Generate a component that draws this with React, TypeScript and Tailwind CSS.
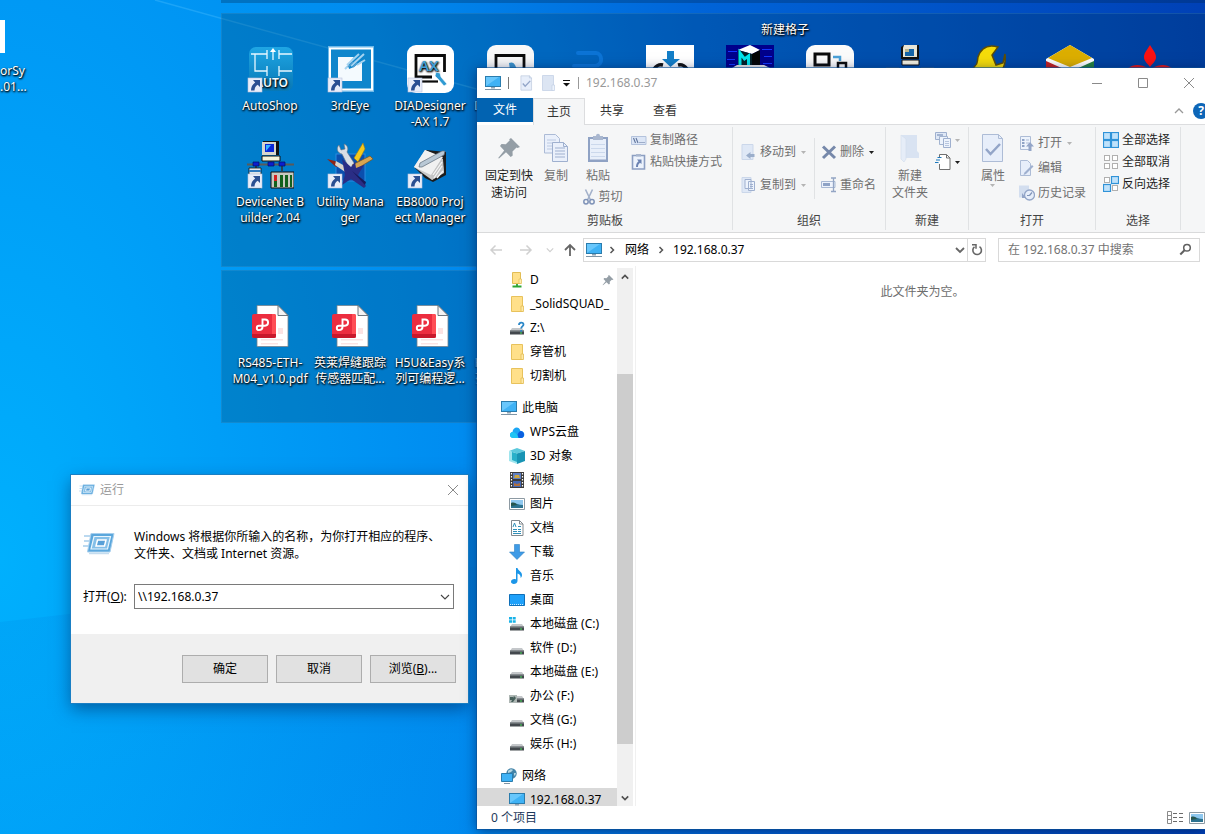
import React, { useState } from 'react';

type IconProps = { className?: string };

/* ---------- Desktop icons (48 x 48) ---------- */

const ShortcutArrow: React.FC = () => (
  <g>
    <rect x="2" y="33" width="14" height="14" fill="#e9edf9" stroke="#b9c3dc" strokeWidth="0.6" />
    <path d="M7 35h7v7l-2.3-2.2c-2 1.4-3 3-3.2 5.700H5c0-3.500 1.200-6 4.200-8.100z" fill="#2b4f92" />
  </g>
);

const DesktopSvg: React.FC<{ children: React.ReactNode; shortcut?: boolean }> = ({ children, shortcut }) => (
  <svg viewBox="0 0 48 48" className="h-12 w-12 shrink-0" aria-hidden="true">
    {children}
    {shortcut && <ShortcutArrow />}
  </svg>
);

const AutoShopIcon = () => (
  <DesktopSvg shortcut>
    <defs>
      <linearGradient id="autoshop" x1="0" y1="0" x2="0" y2="1">
        <stop offset="0" stopColor="#1fa6e4" />
        <stop offset="1" stopColor="#0878b5" />
      </linearGradient>
    </defs>
    <rect x="3" y="2" width="44" height="44" rx="7" fill="url(#autoshop)" />
    <path d="M5 9h16M21 5v9M33 5v9M33 9h13M9 9v17h12M21 21v10M33 21v10M33 26h13M27 6v9" stroke="#e8f8ff" strokeWidth="1.300" fill="none" />
    <path d="M24 7l3-4 3 4z" fill="#fff" />
    <text x="9" y="42" fontFamily="Noto Sans, sans-serif" fontWeight="600" fontSize="12" fill="#f2fbff">AUTO</text>
  </DesktopSvg>
);

const ThirdEyeIcon = () => (
  <DesktopSvg shortcut>
    <rect x="2" y="1" width="46" height="46" fill="#6fb9e8" />
    <rect x="4" y="3.500" width="42" height="41" fill="#0f86cc" stroke="#fff" strokeWidth="2" />
    <path d="M12 12h16l-6 7 1 5 5-2 5-4 3-2v20H15l-3-3z" fill="#f4fafe" />
    <path d="M21 20l12-11M25 21l13-12M31 20l8-5M19 24l4-4" stroke="#a5d3f0" strokeWidth="2" />
    <path d="M22 22l5-5M27 22l4-4" stroke="#4d9ed2" strokeWidth="1.500" />
  </DesktopSvg>
);

const DiaDesignerIcon = () => (
  <DesktopSvg shortcut>
    <rect x="1" y="0" width="47" height="48" rx="9" fill="#fff" />
    <path d="M26 32H10V10.500h28.500V27" stroke="#0b0b0b" strokeWidth="2.800" fill="none" />
    <path d="M16 36.500h16" stroke="#0b0b0b" strokeWidth="2.200" />
    <text x="13" y="26" fontFamily="Noto Sans, sans-serif" fontWeight="600" fontSize="15" fill="#429fd6">AX</text>
    <path d="M30 27l4 1 1 4 6 7-3 2-6-7-3-3z" fill="#2f9ad2" stroke="#fff" strokeWidth="0.600" />
  </DesktopSvg>
);

const DeviceNetIcon = () => (
  <DesktopSvg shortcut>
    <path d="M17 0h16v14H17z" fill="#111" />
    <path d="M16 1h14v13H16z" fill="#d6d6ce" />
    <path d="M19 3h9v8h-9z" fill="#0a28d8" />
    <path d="M20 4h5l-5 6z" fill="#36b4ff" />
    <path d="M16 15h18v5H16z" fill="#f3f3da" stroke="#111" />
    <path d="M1 23.500h48" stroke="#5a5a5a" strokeWidth="2" />
    <path d="M25 20v3M10 25v4M36 25v5" stroke="#333" strokeWidth="1.500" />
    <path d="M7 21h6v4H7zM22 21h6v4h-6zM33 21h6v4h-6z" fill="#0a1ed0" stroke="#05105e" strokeWidth="0.700" />
    <path d="M3 27h12v20H3z" fill="#e0e4e8" stroke="#111" strokeWidth="0.800" />
    <path d="M3 30h12" stroke="#2f7ac0" strokeWidth="2" />
    <path d="M25 31h23v16H25z" fill="#c9c9c0" stroke="#111" />
    <path d="M28 34h3v12h-3zM34 34h3v12h-3zM39 34h3v12h-3zM44 34h2v12h-2z" fill="#12601c" />
    <path d="M28 34h3v6h-3z" fill="#d42020" />
  </DesktopSvg>
);

const UtilityIcon = () => (
  <DesktopSvg shortcut>
    <rect x="10" y="13" width="29" height="27" fill="#0b4fae" stroke="#2a8ae0" />
    <path d="M13 4c-3 3-2 8 3 9l8 16 6-4-9-14c2-4 0-7-3-8l1 5-4 1z" fill="#d9dee6" stroke="#68737f" strokeWidth="0.600" />
    <path d="M37 2l-9 15 4 4 7-13z" fill="#f4c91e" stroke="#a67b10" strokeWidth="0.600" />
    <path d="M47 18l-3-3-18 9 3 5z" fill="#d7a552" stroke="#7a531a" strokeWidth="0.700" />
    <path d="M1 18l8 2 5 4-4 2z" fill="#8f2517" />
    <path d="M10 20l16 9-4 4-13-9z" fill="#d9d4cc" />
    <path d="M16 18l9 8 4-5 1 6 8-3-6 10 8 11-2 2-13-9-9 6 3-10z" fill="#2a2d85" />
    <path d="M26 30l14 11-1 3z" fill="#171a5c" />
  </DesktopSvg>
);

const Eb8000Icon = () => (
  <DesktopSvg shortcut>
    <path d="M9 27L20 9l20 2v23L27 41l-8-4z" fill="#1c1c1c" />
    <path d="M8 26L19 9l18 9 1 14-12 7-7-5z" fill="#c9c9c9" />
    <path d="M8 26L19 9l18 7-12 18z" fill="#f1f1f1" />
    <path d="M25 35l11-18 2 14-12 8z" fill="#c4c4c4" />
    <path d="M28 37l8-12M27 34l9-13M31 37l6-7" stroke="#f6f6f6" strokeWidth="1.300" />
    <path d="M14 22l22-12h3l-1 4-22 12-3 0z" fill="#b9c8d5" stroke="#5b6a78" strokeWidth="0.700" />
  </DesktopSvg>
);

const ScreenAppIcon = () => (
  <DesktopSvg>
    <rect x="1" y="0" width="47" height="48" rx="9" fill="#f8f8f8" />
    <path d="M10 36V10.500h28V36z" stroke="#0b0b0b" strokeWidth="2.800" fill="none" />
    <path d="M23 18c5-2 6 2 8 6l-7 1z" fill="#3b93cb" />
  </DesktopSvg>
);

const SwirlIcon = () => (
  <DesktopSvg>
    <path d="M12 8h18c6 0 8 12-1 13H8" stroke="#0c74d6" strokeWidth="4" fill="none" strokeLinecap="round" />
  </DesktopSvg>
);

const DownloadAppIcon = () => (
  <DesktopSvg>
    <rect width="48" height="48" fill="#fff" />
    <path d="M21 6h7v8h6l-9.500 8L16 14h5z" fill="#147fc8" />
    <path d="M8 24c3-4 5-5 9-4M41 24c-3-4-5-5-9-4" stroke="#111" strokeWidth="3.500" fill="none" />
  </DesktopSvg>
);

const CubeIcon = () => (
  <DesktopSvg>
    <rect width="48" height="48" fill="#00008b" />
    <path d="M2 6h9v1H2zM36 4h10v1H36zM1 14h8v1H1zM38 11h8v1h-8zM3 19h6v1H3zM37 18h9v1h-9z" fill="#1236ff" />
    <path d="M12 5l12-5 10 5-8 4z" fill="#fff" />
    <path d="M26 9l8-4v17h-8z" fill="#050505" />
    <path d="M12 5l14 4v14H12z" fill="#032128" />
    <path d="M14 20V8l4.500 6 4-3v11" stroke="#00e4ec" strokeWidth="3" fill="none" />
    <path d="M6 23l5-3h27l6 3v2H6z" fill="#e9e9e9" />
  </DesktopSvg>
);

const LinkAppIcon = () => (
  <DesktopSvg>
    <rect width="48" height="48" rx="9" fill="#fbfbfb" />
    <path d="M9 9h14v11H9z" stroke="#0b0b0b" strokeWidth="3" fill="none" />
    <path d="M27 12h7v4" stroke="#4aa1d8" strokeWidth="2.500" fill="none" />
    <path d="M32 24v-6h8v6" stroke="#0b0b0b" strokeWidth="2.500" fill="none" />
  </DesktopSvg>
);

const OldPcIcon = () => (
  <DesktopSvg>
    <path d="M15 2l3-2h15v14H15z" fill="#111" />
    <path d="M18 0h13v12H17V3z" fill="#e8e5d6" />
    <path d="M19 4h9v7h-9z" fill="#1464a8" />
    <path d="M19 4h4v3h-4z" fill="#b9b58f" />
    <path d="M16 15h17v5H16z" fill="#f4f2e2" stroke="#111" />
    <path d="M0 23h13M35 23h13" stroke="#5f656b" strokeWidth="1.500" />
  </DesktopSvg>
);

const YellowWrenchIcon = () => (
  <DesktopSvg>
    <path d="M0 32l9-11c3-2 2-4 3-9C15 3 22-1 32 2l-6 8 4 10 7-2 2-9c1 8-1 13-3 16L8 40z" fill="#f5dc0a" stroke="#5b4d08" strokeWidth="1.500" />
  </DesktopSvg>
);

const GoldBoxIcon = () => (
  <DesktopSvg>
    <path d="M0 14L24 0l24 14v26H0z" fill="#fff" />
    <path d="M2 13L24 0l22 13-22 9z" fill="#dcae00" />
    <path d="M0 16l20 9v20L0 34z" fill="#c42121" />
    <path d="M48 16l-20 9v20l20-11z" fill="#26823f" />
  </DesktopSvg>
);

const RedDiamondIcon = () => (
  <DesktopSvg>
    <path d="M24 0c3 5 6 8 6 12s-3 6-6 10c-3-4-6-6-6-10s3-7 6-12z" fill="#fb1212" />
    <path d="M2 23c6-4 12-4 20 0l2 6H8zM46 23c-6-4-12-4-20 0l-2 6h16z" fill="#e01818" />
  </DesktopSvg>
);

const PdfIcon = () => (
  <DesktopSvg>
    <path d="M11 3.500h21l10 10v31H11z" fill="#fff" stroke="#77838d" strokeWidth="0.800" />
    <path d="M32 3.500l10 10H32z" fill="#f3f3f3" stroke="#5e6870" strokeWidth="0.900" />
    <path d="M32 26h5v6h-5zM15 37h22v1.500H15zM15 41h17v1.500H15z" fill="#fbe3e3" />
    <rect x="6" y="12" width="24" height="24" rx="2" fill="#ec2d3f" />
    <path d="M26 12h2a2 2 0 012 2v20a2 2 0 01-2 2h-2z" fill="#ff4d55" />
    <path d="M6 32h24v2a2 2 0 01-2 2H8a2 2 0 01-2-2z" fill="#c8182b" />
    <path d="M16.500 20V17.500h2.500a3.100 3.100 0 010 6.200h-6a2.200 2.200 0 100 4.400c2.300 0 3.500-1 3.500-3V20" stroke="#fff" strokeWidth="1.900" fill="none" />
  </DesktopSvg>
);

/* ---------- Small icons ---------- */

const MonitorIcon: React.FC<IconProps> = ({ className = 'h-4 w-4' }) => (
  <svg viewBox="0 0 16 16" className={className} aria-hidden="true">
    <rect x="0.500" y="1.500" width="15" height="10" fill="#3fb2f5" stroke="#2a7cad" />
    <path d="M1 2h13L1 11z" fill="#7bd0ff" opacity="0.700" />
    <path d="M6 12h4v1.500H6z" fill="#8fa3b3" />
    <path d="M0 14.500h16" stroke="#7f95a6" />
  </svg>
);

const FolderIcon: React.FC<{ shared?: boolean }> = ({ shared }) => (
  <svg viewBox="0 0 16 16" className="h-4 w-4" aria-hidden="true">
    {shared ? (
      <>
        <path d="M3.500.5h8v11h-8z" fill="#ffe08a" stroke="#e2bd55" />
        <path d="M10 7h2.500v4.500H10z" fill="#ffedb0" stroke="#e2bd55" strokeWidth="0.700" />
        <path d="M8 12v2.500M3.500 14.500h9" stroke="#2ca534" strokeWidth="1.800" />
      </>
    ) : (
      <>
        <path d="M2.500.5h11v15h-11z" fill="#ffe08a" stroke="#e8c25c" />
        <path d="M12 10h2.500v5.500H12z" fill="#ffe9a6" stroke="#e2bd55" strokeWidth="0.800" />
      </>
    )}
  </svg>
);

const DriveIcon: React.FC<{ variant?: 'system' | 'office' | 'unknown' }> = ({ variant }) => (
  <svg viewBox="0 0 16 16" className="h-4 w-4" aria-hidden="true">
    <path d="M3 8h10l2 3H1z" fill="#c4c7ca" />
    <path d="M1 10.500h14v4H1z" fill="#43484d" />
    <path d="M1 10.500h14v1H1z" fill="#8d9296" />
    <rect x="11" y="12.500" width="2" height="1" fill="#46e05a" />
    {variant === 'system' && <path d="M0 1h3v2.500H0zM3.700 1h3v2.500h-3zM0 4.200h3v2.500H0zM3.700 4.200h3v2.500h-3z" fill="#18b2e8" />}
    {variant === 'office' && (
      <>
        <path d="M0 7h8v8H0z" fill="#aeb7b4" />
        <path d="M1 9h3v3H1zM5 8l2 2-3 4H2z" fill="#47605c" />
      </>
    )}
    {variant === 'unknown' && (
      <path d="M10 5c0-3 4.500-3 4.500-.5 0 2-2.300 1.800-2.300 4M12.200 10v1.800" stroke="#2b87c8" strokeWidth="1.800" fill="none" />
    )}
  </svg>
);

const CloudIcon = () => (
  <svg viewBox="0 0 16 16" className="h-4 w-4" aria-hidden="true">
    <path d="M4.500 14C0 14 0 8.500 3.500 8 4 3 10 1.500 11.500 7 16.500 7 16.500 14 12 14z" fill="#1ba6f5" />
    <path d="M8 14c0-3 1.500-7 4-7 4 .5 4 7 0 7z" fill="#0b5fe0" />
    <path d="M4.500 14C0 14 0 8.500 3.500 8c3 0 5.500 3 6 6z" fill="#20c4f4" />
  </svg>
);

const Cube3dIcon = () => (
  <svg viewBox="0 0 16 16" className="h-4 w-4" aria-hidden="true">
    <path d="M0 3l8-3 8 3-8 2.500z" fill="#5cc9dd" />
    <path d="M0 3l8 2.500V16l-8-3z" fill="#9fe5ee" />
    <path d="M16 3L8 5.500V16l8-3z" fill="#1894b4" />
    <path d="M3 4l5 1.500V14l-5-2z" fill="#29b0c9" />
  </svg>
);

const VideoIcon = () => (
  <svg viewBox="0 0 16 16" className="h-4 w-4" aria-hidden="true">
    <path d="M1 0h14v16H1z" fill="#3b3b3b" />
    <path d="M4 1h8v6H4z" fill="#5e7fc4" />
    <path d="M4 9h8v6H4z" fill="#4468b5" />
    <path d="M6 3h4l1 3H5z" fill="#cda540" />
    <path d="M5 11l3 1 3-1v3H5z" fill="#b0703f" />
    <path d="M2.500 1v15M13.500 1v15" stroke="#fff" strokeWidth="1.200" strokeDasharray="1.500 1.500" />
  </svg>
);

const PictureIcon: React.FC<IconProps> = ({ className = 'h-4 w-4' }) => (
  <svg viewBox="0 0 16 16" className={className} aria-hidden="true">
    <path d="M.5 2.500h15v11H.5z" fill="#fff" stroke="#8d9aa3" />
    <path d="M2 4h12v8H2z" fill="#8fc8ef" />
    <path d="M2 8c4-2 6 1 12 1v3H2z" fill="#2d7390" />
    <path d="M2 7c3-1 5 0 6 2l-6 1z" fill="#27564e" />
  </svg>
);

const DocumentIcon = () => (
  <svg viewBox="0 0 16 16" className="h-4 w-4" aria-hidden="true">
    <path d="M2.500.5h8l3.500 3.500v11.500H2.500z" fill="#fff" stroke="#82898e" />
    <path d="M10.500.5V4H14" fill="none" stroke="#82898e" />
    <path d="M4 7l1.500-4L7 7M4 9.500h4M4 11.500h4M4 13.500h8M9 6.500h3M9 9.500h3M9 11.500h3" stroke="#2f8fb8" fill="none" />
  </svg>
);

const DownloadIcon = () => (
  <svg viewBox="0 0 16 16" className="h-4 w-4" aria-hidden="true">
    <path d="M5.500.5h5V8h5L8 15.500.5 8h5z" fill="#3f9be6" stroke="#2b7fc4" strokeWidth="0.600" />
  </svg>
);

const MusicIcon = () => (
  <svg viewBox="0 0 16 16" className="h-4 w-4" aria-hidden="true">
    <path d="M7 0h1.500c.5 3 4.500 3.500 4.500 7 0 1.500-.7 2.500-1.500 3 .5-2.500-1-4-3-4.500V13c0 3.500-6.500 4-6.500.8C2 11.500 5 10.500 7 11.500z" fill="#1b96e8" />
  </svg>
);

const DesktopPlaceIcon = () => (
  <svg viewBox="0 0 16 16" className="h-4 w-4" aria-hidden="true">
    <path d="M.5 2.500h15v11H.5z" fill="#1fa1fa" stroke="#0f6fb8" />
    <path d="M1 12.500h14" stroke="#fff" strokeDasharray="1 1" opacity="0.800" />
  </svg>
);

const NetworkIcon = () => (
  <svg viewBox="0 0 16 16" className="h-4 w-4" aria-hidden="true">
    <circle cx="10.500" cy="5.500" r="5.200" fill="#4484a8" />
    <path d="M7 3c2-2 4-2 5-1l-2 2-3 1zM13 5h2l-1 3-1-1z" fill="#b5d6e2" />
    <path d="M.5 5.500h11v8H.5z" fill="#3fb2f5" stroke="#2a7cad" />
    <path d="M3 15.500h6" stroke="#7f95a6" />
  </svg>
);

const PinIcon: React.FC<IconProps> = ({ className = 'h-6 w-6' }) => (
  <svg viewBox="0 0 24 24" className={className} aria-hidden="true">
    <path d="M14 2l9 9-2.500 1-1-.5-4 4 .2 4-2 1.500-4.700-4.700L2 22.500 1.200 22l6-7.500L3 10l1.500-2 4.300.3 4-4-.6-1z" fill="#949ea6" />
  </svg>
);

const RunIcon: React.FC<IconProps> = ({ className }) => (
  <svg viewBox="0 0 32 24" className={className} aria-hidden="true">
    <path d="M8 1.500h23L27 20H4.500z" fill="#5ba7dc" stroke="#a7cfee" />
    <path d="M11 4.500h16.500L24.500 17H8z" fill="#84bfe8" stroke="#e8f5fd" strokeWidth="1.200" />
    <path d="M14.500 8h8.500l-1.500 6h-8.500z" fill="#58a0d8" stroke="#fff" strokeWidth="1.500" />
    <path d="M1 4h6M1 9h5M0 14h5" stroke="#a5cdec" strokeWidth="1.300" />
    <path d="M6 21.500h20" stroke="#c4dcef" strokeWidth="1.500" />
  </svg>
);

const CopyPagesIcon = () => (
  <svg viewBox="0 0 26 30" className="h-[30px] w-[26px]" aria-hidden="true">
    <path d="M1.500 1.500h11l4 4V20h-15z" fill="#eaf0fb" stroke="#acbbd6" />
    <path d="M4 7h9M4 10h9M4 13h9M4 16h9" stroke="#bccae2" />
    <path d="M9.500 9.500h11l4 4V28.500h-15z" fill="#eaf0fb" stroke="#9fb0cf" />
    <path d="M20.500 9.500v4h4M12 15h10M12 18h10M12 21h10M12 24h10" stroke="#9fb0cf" fill="none" />
  </svg>
);

const ClipboardIcon = () => (
  <svg viewBox="0 0 22 30" className="h-[30px] w-[22px]" aria-hidden="true">
    <path d="M1 4h20v25H1z" fill="#8fa2c4" />
    <path d="M3 6h16v20.500H3z" fill="#e8effa" />
    <path d="M4 11.500h14M4 15.500h14M4 19.500h14M4 23.500h14" stroke="#cbd8ec" />
    <path d="M6 3h3c0-3 4-3 4 0h3v4H6z" fill="#a9b7cf" />
  </svg>
);

const ScissorsIcon = () => (
  <svg viewBox="0 0 12 16" className="h-4 w-3" aria-hidden="true">
    <path d="M2.500.5L7.500 11M9.500.5L4.500 11" stroke="#a3b1ca" strokeWidth="1.600" />
    <circle cx="3" cy="12.800" r="2.200" fill="none" stroke="#7f93b8" strokeWidth="1.500" />
    <circle cx="9" cy="12.800" r="2.200" fill="none" stroke="#7f93b8" strokeWidth="1.500" />
  </svg>
);

const PathIcon = () => (
  <svg viewBox="0 0 16 16" className="h-4 w-4" aria-hidden="true">
    <path d="M.5 4.500h14.500v8H.5z" fill="#dce6f6" stroke="#b3c2dc" />
    <path d="M2.500 6l2 5M5 6l2 5M8.500 10.500h1M10.500 10.500h1M12.500 10.500h1" stroke="#60759c" strokeWidth="1.100" />
  </svg>
);

const PasteShortcutIcon = () => (
  <svg viewBox="0 0 16 16" className="h-4 w-4" aria-hidden="true">
    <path d="M1.500 1.500h12v13.500h-12z" fill="#edf3fc" stroke="#8c9fc2" strokeWidth="1.600" />
    <path d="M5 0h5v2.500H5z" fill="#a9b7cf" />
    <path d="M6 5.500h4.500V10L9 8.800C7.500 10 7 11 7 13H5c0-3 1-4.500 2.500-5.800z" fill="#6c83b2" />
  </svg>
);

const MoveToIcon = () => (
  <svg viewBox="0 0 16 16" className="h-4 w-4" aria-hidden="true">
    <path d="M1 .5h11v15H1z" fill="#dfe8f6" stroke="#cbd7ea" />
    <path d="M13.500 10v3h-4v2L5 11.500 9.500 8v2z" fill="#9baecb" />
  </svg>
);

const CopyToIcon = () => (
  <svg viewBox="0 0 16 16" className="h-4 w-4" aria-hidden="true">
    <path d="M1 .5h9v15H1z" fill="#dfe8f6" stroke="#cbd7ea" />
    <path d="M4 2.500h6v9H4zM7.500 4.500h6v9h-6z" fill="#edf3fc" stroke="#9fb0cf" />
    <path d="M9 7.500h3M9 9.500h3M9 11.500h3" stroke="#9fb0cf" />
  </svg>
);

const DeleteIcon = () => (
  <svg viewBox="0 0 16 16" className="h-4 w-4" aria-hidden="true">
    <path d="M2 2.500l12 11.500M14 2.500L2 14" stroke="#7688aa" strokeWidth="3" />
  </svg>
);

const RenameIcon = () => (
  <svg viewBox="0 0 16 16" className="h-4 w-4" aria-hidden="true">
    <path d="M.5 4.500h13.500v6H.5z" fill="#eef3fc" stroke="#a9b9d4" />
    <path d="M2 6h7v3H2z" fill="#8fa3c6" />
    <path d="M12.500 1v13M10 1h5M10 14.500h5" stroke="#93a5c4" strokeWidth="1.300" />
  </svg>
);

const NewFolderIcon = () => (
  <svg viewBox="0 0 22 30" className="h-[30px] w-[22px]" aria-hidden="true">
    <path d="M3 2h15v16l2 2v5H5z" fill="#d9e3f2" />
    <path d="M2 2l5 4v20l-2 3-3-3z" fill="#e6edf8" stroke="#d0dbeb" strokeWidth="0.600" />
  </svg>
);

const NewItemIcon = () => (
  <svg viewBox="0 0 17 16" className="h-4 w-[17px]" aria-hidden="true">
    <path d="M.5.5h11v7H.5z" fill="#dfe8f6" stroke="#9fb0cf" />
    <path d="M2 3h6" stroke="#8fa3c6" strokeWidth="1.500" />
    <path d="M4.500 4.500h8v8h-8z" fill="#edf3fc" stroke="#a3b4d0" />
    <path d="M8.500 6.500h7v9h-7z" fill="#edf3fc" stroke="#9fb0cf" />
    <path d="M10 9.500h4M10 11.500h4M10 13.500h4" stroke="#b7c5de" />
  </svg>
);

const EasyAccessIcon = () => (
  <svg viewBox="0 0 17 16" className="h-4 w-[17px]" aria-hidden="true">
    <path d="M4.500.5h7L15 4v11.500H4.500z" fill="#fff" />
    <path d="M4.500 3V.5h7L15 4v11.500H4.500V10M11.500.5V4H15" fill="none" stroke="#707070" />
    <path d="M2.500 3.500h4M1 6h4M0 8.500h3.500" stroke="#1b78bd" strokeWidth="1.200" />
  </svg>
);

const PropertiesIcon: React.FC<IconProps> = ({ className = 'h-[30px] w-[24px]' }) => (
  <svg viewBox="0 0 24 30" className={className} aria-hidden="true">
    <path d="M1.500 1.500h16l4 4v23h-20z" fill="#e7eefa" stroke="#adbcd6" />
    <path d="M17.500 1.500v4h4" fill="none" stroke="#adbcd6" />
    <path d="M5 16l4.500 5L19 11" fill="none" stroke="#93a5c8" strokeWidth="2.500" />
  </svg>
);

const OpenIcon = () => (
  <svg viewBox="0 0 16 16" className="h-4 w-4" aria-hidden="true">
    <path d="M1.500 1.500h10v13h-10z" fill="#edf3fc" stroke="#adbcd6" />
    <path d="M3 4h2.500v2H3zM3 7h2.500v2H3zM3 10h2.500v2H3z" fill="#8fa3c6" />
    <path d="M7 5h3M7 8h3" stroke="#adbcd6" />
    <path d="M11 7l4 4.500h-2.500V16h-3v-4.500H7z" fill="#93a5c8" />
  </svg>
);

const EditIcon = () => (
  <svg viewBox="0 0 16 16" className="h-4 w-4" aria-hidden="true">
    <path d="M1.500.5h7l3 3v12h-10z" fill="#e7eefa" stroke="#adbcd6" />
    <path d="M13 5l1.500 1.500L7 14l-2.500 1 1-2.500z" fill="#9fb0cf" />
  </svg>
);

const HistoryIcon = () => (
  <svg viewBox="0 0 16 16" className="h-4 w-4" aria-hidden="true">
    <path d="M0 .5h10v12H0z" fill="#d3deef" />
    <circle cx="10.500" cy="10" r="5" fill="#e7eefa" stroke="#93a5c8" strokeWidth="1.300" />
    <path d="M10.500 10.500l2.500-3M10.500 10.500H8" stroke="#7f93b8" strokeWidth="1.200" />
    <path d="M3 8v5h4z" fill="#93a5c8" />
  </svg>
);

const SelectGridIcon: React.FC<{ on: boolean[]; joined?: boolean }> = ({ on, joined }) => {
  const cells = joined
    ? [[0.5, 0.5], [8.5, 0.5], [0.5, 8.5], [8.5, 8.5]]
    : [[1.5, 1.5], [9.5, 1.5], [1.5, 9.5], [9.5, 9.5]];
  const size = joined ? 7 : 5;
  return (
    <svg viewBox="0 0 16 16" className="h-4 w-4" aria-hidden="true">
      {cells.map(([x, y], i) => (
        <rect
          key={i}
          x={on[i] && !joined ? x - 1 : x}
          y={on[i] && !joined ? y - 1 : y}
          width={on[i] ? 7 : size}
          height={on[i] ? 7 : size}
          fill={on[i] ? '#bfe2fb' : '#fff'}
          stroke={on[i] ? '#3093d8' : '#b0b0b0'}
          strokeWidth={on[i] ? 1.2 : 1}
        />
      ))}
    </svg>
  );
};

const Caret: React.FC<{ dark?: boolean }> = ({ dark }) => (
  <svg viewBox="0 0 5 3" className="h-[3px] w-[5px] shrink-0" aria-hidden="true">
    <path d="M0 0h5L2.500 3z" fill={dark ? '#1e1e1e' : '#b4b4b4'} />
  </svg>
);

const Chevron: React.FC<{ dir: 'up' | 'down' | 'right'; color: string; width?: number; className?: string }> = ({ dir, color, width = 1.5, className = 'h-2.5 w-2.5' }) => {
  const d = { up: 'M1 7l4-4 4 4', down: 'M1 3l4 4 4-4', right: 'M3.500 2l3 3-3 3' }[dir];
  return (
    <svg viewBox="0 0 10 10" className={className} aria-hidden="true">
      <path d={d} fill="none" stroke={color} strokeWidth={width} />
    </svg>
  );
};

const NavArrow: React.FC<{ dir: 'left' | 'right' | 'up'; color: string; width?: number }> = ({ dir, color, width = 1.5 }) => {
  const d = {
    left: 'M13 7H2M6.500 2.500L2 7l4.500 4.500',
    right: 'M1 7h11M7.500 2.500L12 7l-4.500 4.500',
    up: 'M7 13V2M2 7l5-5 5 5',
  }[dir];
  return (
    <svg viewBox="0 0 14 14" className="h-3.5 w-3.5" aria-hidden="true">
      <path d={d} fill="none" stroke={color} strokeWidth={width} />
    </svg>
  );
};

/* ---------- Desktop ---------- */

interface Shortcut {
  icon: React.ReactNode;
  lines: string[];
}

const programRow: Shortcut[] = [
  { icon: <AutoShopIcon />, lines: ['AutoShop'] },
  { icon: <ThirdEyeIcon />, lines: ['3rdEye'] },
  { icon: <DiaDesignerIcon />, lines: ['DIADesigner', '-AX 1.7'] },
  { icon: <ScreenAppIcon />, lines: ['DIADesigner'] },
  { icon: <SwirlIcon />, lines: [] },
  { icon: <DownloadAppIcon />, lines: [] },
  { icon: <CubeIcon />, lines: [] },
  { icon: <LinkAppIcon />, lines: [] },
  { icon: <OldPcIcon />, lines: [] },
  { icon: <YellowWrenchIcon />, lines: [] },
  { icon: <GoldBoxIcon />, lines: [] },
  { icon: <RedDiamondIcon />, lines: [] },
];

const toolRow: Shortcut[] = [
  { icon: <DeviceNetIcon />, lines: ['DeviceNet B', 'uilder 2.04'] },
  { icon: <UtilityIcon />, lines: ['Utility Mana', 'ger'] },
  { icon: <Eb8000Icon />, lines: ['EB8000 Proj', 'ect Manager'] },
];

const pdfRow: Shortcut[] = [
  { icon: <PdfIcon />, lines: ['RS485-ETH-', 'M04_v1.0.pdf'] },
  { icon: <PdfIcon />, lines: ['英莱焊缝跟踪', '传感器匹配...'] },
  { icon: <PdfIcon />, lines: ['H5U&Easy系', '列可编程逻...'] },
  { icon: <PdfIcon />, lines: ['H5U&Easy系', '列可编程逻...'] },
];

const ShortcutRow: React.FC<{ items: Shortcut[] }> = ({ items }) => (
  <div className="flex h-24 pl-2">
    {items.map((item, i) => (
      <button key={i} type="button" className="flex w-20 shrink-0 flex-col items-center gap-[5px] text-white [text-shadow:0_1px_2px_#000,1px_1px_2px_#000]">
        {item.icon}
        <span className="flex flex-col leading-4 whitespace-nowrap">
          {item.lines.map((line, n) => <span key={n}>{line}</span>)}
        </span>
      </button>
    ))}
  </div>
);

const Wallpaper: React.FC = () => (
  <svg viewBox="0 0 1205 834" preserveAspectRatio="none" className="absolute inset-0 h-full w-full" aria-hidden="true">
    <defs>
      <radialGradient id="sky" gradientUnits="userSpaceOnUse" cx="0" cy="0" r="1" gradientTransform="translate(0 560) scale(1260 2400)">
        <stop offset="0" stopColor="#00b0fd" />
        <stop offset="0.180" stopColor="#009ef7" />
        <stop offset="0.370" stopColor="#008cf0" />
        <stop offset="0.600" stopColor="#0064d8" />
        <stop offset="1" stopColor="#003fb4" />
      </radialGradient>
      <linearGradient id="beam" x1="0" y1="0" x2="0" y2="1">
        <stop offset="0" stopColor="#0080e0" stopOpacity="0.200" />
        <stop offset="1" stopColor="#0080e0" stopOpacity="0.050" />
      </linearGradient>
    </defs>
    <rect width="1205" height="834" fill="url(#sky)" />
    <path d="M155 0L480 90" stroke="#4fc0ff" strokeWidth="1.500" opacity="0.350" />
    <path d="M0 622L480 566V834H0z" fill="url(#beam)" />
  </svg>
);

/* ---------- Run dialog ---------- */

const RunDialog: React.FC = () => {
  const [command, setCommand] = useState('\\\\192.168.0.37');
  const buttonClass = 'h-7 w-[86px] border border-[#adadad] bg-[#e1e1e1]';

  return (
    <section aria-label="运行" className="absolute left-[71px] top-[475px] w-[397px] bg-white text-black shadow-[0_0_0_1px_#1a7fc4,0_6px_16px_rgba(0,30,80,0.5)]">
      <header className="flex h-[31px] items-center border-b border-[#ececec] pl-2 pr-[9px] text-[#999]">
        <RunIcon className="mr-[5px] h-3.5 w-4" />
        <h2>运行</h2>
        <button type="button" aria-label="关闭" className="ml-auto">
          <svg viewBox="0 0 12 12" className="h-3 w-3" aria-hidden="true">
            <path d="M1 1l10 10M11 1L1 11" stroke="#8a8a8a" />
          </svg>
        </button>
      </header>
      <div className="flex h-32 flex-col pl-3 pr-3.5 pt-[22px]">
        <div className="flex items-start">
          <RunIcon className="mt-1 h-6 w-8" />
          <p className="ml-[19px] leading-[17px]">
            Windows 将根据你所输入的名称，为你打开相应的程序、<br />文件夹、文档或 Internet 资源。
          </p>
        </div>
        <div className="mt-[22px] flex items-center">
          <label htmlFor="command" className="w-[51px] whitespace-nowrap">打开(<u>O</u>):</label>
          <div className="flex h-[25px] flex-1 items-center border border-[#7a7a7a] pl-[3px] pr-[3px]">
            <input id="command" value={command} onChange={e => setCommand(e.target.value)} className="min-w-0 flex-1 outline-none" />
            <button type="button" aria-label="展开">
              <Chevron dir="down" color="#444" width={1.1} />
            </button>
          </div>
        </div>
      </div>
      <footer className="flex h-[69px] items-start justify-end gap-2 bg-[#f0f0f0] pr-3 pt-[21px]">
        <button type="button" className={buttonClass}>确定</button>
        <button type="button" className={buttonClass}>取消</button>
        <button type="button" className={buttonClass}>浏览(<u>B</u>)...</button>
      </footer>
    </section>
  );
};

/* ---------- Explorer window ---------- */

const SmallCommand: React.FC<{ icon: React.ReactNode; label: string; active?: boolean; caret?: 'light' | 'dark' }> = ({ icon, label, active, caret }) => (
  <button type="button" className={`flex h-[22px] items-center gap-[3px] whitespace-nowrap ${active ? 'text-[#1e1e1e]' : 'text-[#6f6f6f]'}`}>
    {icon}
    <span>{label}</span>
    {caret && <span className="ml-0.5"><Caret dark={caret === 'dark'} /></span>}
  </button>
);

const BigCommand: React.FC<{ icon: React.ReactNode; lines: string[]; active?: boolean; caret?: boolean }> = ({ icon, lines, active, caret }) => (
  <button type="button" className={`flex flex-col items-center whitespace-nowrap leading-[17px] ${active ? 'text-[#1e1e1e]' : 'text-[#6f6f6f]'}`}>
    <span className="flex h-[38px] items-center pt-1 pb-1">{icon}</span>
    {lines.map(line => <span key={line}>{line}</span>)}
    {caret && <Caret />}
  </button>
);

const RibbonGroup: React.FC<{ title: string; width: string; children: React.ReactNode }> = ({ title, width, children }) => (
  <div className={`my-0.5 flex shrink-0 flex-col border-r border-[#e0e2e4] ${width}`}>
    <div className="flex flex-1 pt-0.5">{children}</div>
    <div className="h-[17px] text-center leading-4 text-[#444]">{title}</div>
  </div>
);

const Ribbon: React.FC = () => (
  <div className="flex h-[108px] overflow-hidden border-b border-[#d9dadb] bg-[#f5f6f7] pl-px">
    <RibbonGroup title="剪贴板" width="w-[255px]">
      <div className="flex w-[62px] justify-center">
        <BigCommand icon={<PinIcon />} lines={['固定到快', '速访问']} active />
      </div>
      <div className="flex w-8 justify-center">
        <BigCommand icon={<CopyPagesIcon />} lines={['复制']} />
      </div>
      <div className="flex w-[52px] flex-col items-center">
        <BigCommand icon={<ClipboardIcon />} lines={['粘贴']} />
        <div className="pl-2.5 pt-0.5">
          <SmallCommand icon={<ScissorsIcon />} label="剪切" />
        </div>
      </div>
      <div className="ml-[7px] flex flex-col items-start">
        <SmallCommand icon={<PathIcon />} label="复制路径" />
        <SmallCommand icon={<PasteShortcutIcon />} label="粘贴快捷方式" />
      </div>
    </RibbonGroup>
    <RibbonGroup title="组织" width="w-[153px]">
      <div className="mb-3.5 flex flex-1 pt-[9px]">
        <div className="flex flex-col gap-[11px] pl-2 pt-[3px]">
          <SmallCommand icon={<MoveToIcon />} label="移动到" caret="light" />
          <SmallCommand icon={<CopyToIcon />} label="复制到" caret="light" />
        </div>
        <div className="ml-2 flex flex-col gap-[11px] border-l border-[#e0e2e4] pl-1.5 pt-[3px]">
          <SmallCommand icon={<DeleteIcon />} label="删除" caret="dark" />
          <SmallCommand icon={<RenameIcon />} label="重命名" />
        </div>
      </div>
    </RibbonGroup>
    <RibbonGroup title="新建" width="w-[83px]">
      <div className="flex w-12 justify-center">
        <BigCommand icon={<NewFolderIcon />} lines={['新建', '文件夹']} />
      </div>
      <div className="flex flex-col pl-px">
        <button type="button" aria-label="新建项目" className="flex h-[22px] items-center gap-[3px]"><NewItemIcon /><Caret /></button>
        <button type="button" aria-label="轻松访问" className="flex h-[22px] items-center gap-[3px]"><EasyAccessIcon /><Caret dark /></button>
      </div>
    </RibbonGroup>
    <RibbonGroup title="打开" width="w-[127px]">
      <div className="flex w-12 justify-center">
        <BigCommand icon={<PropertiesIcon />} lines={['属性']} caret />
      </div>
      <div className="flex flex-col items-start gap-[3px] pl-0.5 pt-[3px]">
        <SmallCommand icon={<OpenIcon />} label="打开" caret="light" />
        <SmallCommand icon={<EditIcon />} label="编辑" />
        <SmallCommand icon={<HistoryIcon />} label="历史记录" />
      </div>
    </RibbonGroup>
    <RibbonGroup title="选择" width="w-[85px]">
      <div className="flex flex-col items-start pl-[7px]">
        <SmallCommand icon={<SelectGridIcon on={[true, true, true, true]} joined />} label="全部选择" active />
        <SmallCommand icon={<SelectGridIcon on={[false, false, false, false]} />} label="全部取消" active />
        <SmallCommand icon={<SelectGridIcon on={[false, true, true, false]} />} label="反向选择" active />
      </div>
    </RibbonGroup>
  </div>
);

interface TreeItem {
  label: string;
  icon: React.ReactNode;
  pinned?: boolean;
  selected?: boolean;
}

const quickAccess: TreeItem[] = [
  { label: 'D', icon: <FolderIcon shared />, pinned: true },
  { label: '_SolidSQUAD_', icon: <FolderIcon /> },
  { label: 'Z:\\', icon: <DriveIcon variant="unknown" /> },
  { label: '穿管机', icon: <FolderIcon /> },
  { label: '切割机', icon: <FolderIcon /> },
];

const thisPc: TreeItem[] = [
  { label: 'WPS云盘', icon: <CloudIcon /> },
  { label: '3D 对象', icon: <Cube3dIcon /> },
  { label: '视频', icon: <VideoIcon /> },
  { label: '图片', icon: <PictureIcon /> },
  { label: '文档', icon: <DocumentIcon /> },
  { label: '下载', icon: <DownloadIcon /> },
  { label: '音乐', icon: <MusicIcon /> },
  { label: '桌面', icon: <DesktopPlaceIcon /> },
  { label: '本地磁盘 (C:)', icon: <DriveIcon variant="system" /> },
  { label: '软件 (D:)', icon: <DriveIcon /> },
  { label: '本地磁盘 (E:)', icon: <DriveIcon /> },
  { label: '办公 (F:)', icon: <DriveIcon variant="office" /> },
  { label: '文档 (G:)', icon: <DriveIcon /> },
  { label: '娱乐 (H:)', icon: <DriveIcon /> },
];

const TreeRow: React.FC<{ item: TreeItem; root?: boolean }> = ({ item, root }) => (
  <li>
    <a href="#" className={`flex h-6 items-center gap-[5px] whitespace-nowrap text-black ${root ? 'pl-6' : 'pl-8'} ${item.selected ? 'bg-[#d9d9d9]' : ''}`}>
      {item.icon}
      <span>{item.label}</span>
      {item.pinned && <span className="ml-auto mr-[3px]"><PinIcon className="h-3 w-3" /></span>}
    </a>
  </li>
);

const NavigationPane: React.FC = () => (
  <nav className="flex w-[159px] shrink-0 border-r border-[#f0f0f0]">
    <div className="flex w-[140px] flex-col gap-2 overflow-hidden pt-0.5">
      <ul>{quickAccess.map(item => <TreeRow key={item.label} item={item} />)}</ul>
      <ul>
        <TreeRow root item={{ label: '此电脑', icon: <MonitorIcon /> }} />
        {thisPc.map(item => <TreeRow key={item.label} item={item} />)}
      </ul>
      <ul>
        <TreeRow root item={{ label: '网络', icon: <NetworkIcon /> }} />
        <TreeRow item={{ label: '192.168.0.37', icon: <MonitorIcon />, selected: true }} />
      </ul>
    </div>
    <div className="mt-0.5 flex w-4 flex-col items-center bg-[#f0f0f0]">
      <button type="button" aria-label="向上滚动" className="flex h-[17px] items-center"><Chevron dir="up" color="#505050" width={2} className="h-2 w-2.5" /></button>
      <div className="flex w-full flex-1 flex-col">
        <div className="grow-[89]" />
        <div className="grow-[370] bg-[#cdcdcd]" />
        <div className="grow-[45]" />
      </div>
      <button type="button" aria-label="向下滚动" className="flex h-[17px] items-center"><Chevron dir="down" color="#505050" width={2} className="h-2 w-2.5" /></button>
    </div>
  </nav>
);

const AddressRow: React.FC = () => (
  <div className="flex h-[33px] shrink-0 items-center pr-[5px]">
    <div className="flex w-[106px] shrink-0 items-center pl-3">
      <button type="button" aria-label="后退"><NavArrow dir="left" color="#d0d0d0" /></button>
      <button type="button" aria-label="前进" className="ml-4"><NavArrow dir="right" color="#d0d0d0" /></button>
      <button type="button" aria-label="最近" className="ml-[13px]"><Chevron dir="down" color="#d0d0d0" className="h-2 w-2" /></button>
      <button type="button" aria-label="上移" className="ml-[9px]"><NavArrow dir="up" color="#666" width={1.8} /></button>
    </div>
    <div className="flex h-6 flex-1 items-center border border-[#d9d9d9] pl-0.5 whitespace-nowrap text-black">
      <MonitorIcon className="h-[18px] w-4" />
      <span className="mx-[5px]"><Chevron dir="right" color="#555" /></span>
      <button type="button" className="ml-[3px]">网络</button>
      <span className="mx-[7px]"><Chevron dir="right" color="#555" /></span>
      <button type="button">192.168.0.37</button>
      <button type="button" aria-label="历史" className="ml-auto mr-0.5"><Chevron dir="down" color="#666" width={1.8} /></button>
      <button type="button" aria-label="刷新" className="flex h-full w-[18px] items-center justify-center border-l border-[#d9d9d9]">
        <svg viewBox="0 0 12 12" className="h-3 w-3" aria-hidden="true">
          <path d="M3.500 2.800A4.300 4.300 0 108.500 2.600" fill="none" stroke="#666" strokeWidth="1.600" />
          <path d="M1 .8h4v4" fill="none" stroke="#666" strokeWidth="1.500" />
        </svg>
      </button>
    </div>
    <div className="ml-3 flex h-6 w-[202px] shrink-0 items-center border border-[#d9d9d9] pl-[9px] pr-[7px]">
      <input aria-label="搜索" placeholder="在 192.168.0.37 中搜索" className="min-w-0 flex-1 outline-none placeholder:text-[#737373]" />
      <svg viewBox="0 0 13 13" className="h-[13px] w-[13px]" aria-hidden="true">
        <circle cx="8" cy="4.800" r="3.300" fill="none" stroke="#606060" strokeWidth="1.500" />
        <path d="M5.500 7.300L1.300 11.500" stroke="#606060" strokeWidth="2" />
      </svg>
    </div>
  </div>
);

const ExplorerWindow: React.FC = () => (
  <main className="absolute bottom-[5px] left-[477px] right-0 top-[68px] flex flex-col overflow-hidden bg-white shadow-[0_0_0_1px_rgba(10,80,150,0.6),0_2px_12px_rgba(0,20,70,0.6)]">
    <header className="flex h-[30px] shrink-0 items-center pl-2">
      <MonitorIcon className="h-[18px] w-4" />
      <span className="ml-[7px] h-3 w-px bg-[#777]" />
      <button type="button" aria-label="属性" className="ml-[11px]"><PropertiesIcon className="h-4 w-[13px]" /></button>
      <button type="button" aria-label="新建文件夹" className="ml-[9px]">
        <svg viewBox="0 0 13 16" className="h-4 w-[13px]" aria-hidden="true">
          <path d="M.5.5h11v15H.5z" fill="#dce5f3" stroke="#cdd8ea" />
          <path d="M10 10h2.500v5.500H10z" fill="#edf3fc" stroke="#c3d0e4" strokeWidth="0.700" />
        </svg>
      </button>
      <button type="button" aria-label="自定义" className="ml-2">
        <svg viewBox="0 0 7 7" className="h-[7px] w-[7px]" aria-hidden="true">
          <path d="M0 .5h7" stroke="#111" />
          <path d="M0 3h7L3.500 6.500z" fill="#111" />
        </svg>
      </button>
      <span className="ml-2 mr-[7px] h-3 w-px bg-[#999]" />
      <h1 className="text-[#999]">192.168.0.37</h1>
      <div className="ml-auto flex items-center gap-9 pr-[11px] text-[#8a8a8a]">
        <button type="button" aria-label="最小化"><svg viewBox="0 0 10 10" className="h-2.5 w-2.5"><path d="M0 5.500h10" stroke="currentColor" /></svg></button>
        <button type="button" aria-label="最大化"><svg viewBox="0 0 10 10" className="h-2.5 w-2.5"><path d="M.5.5h9v9h-9z" fill="none" stroke="currentColor" /></svg></button>
        <button type="button" aria-label="关闭"><svg viewBox="0 0 10 10" className="h-2.5 w-2.5"><path d="M0 0l10 10M10 0L0 10" stroke="currentColor" /></svg></button>
      </div>
    </header>
    <div role="tablist" className="flex h-[27px] shrink-0 text-[#333]">
      <button role="tab" aria-selected="false" type="button" className="mb-[3px] w-14 bg-[#0263b1] text-white">文件</button>
      <div className="flex w-[52px] border-x border-t border-[#dcdddf] bg-[#f5f6f7]">
        <button role="tab" aria-selected="true" type="button" className="flex-1">主页</button>
      </div>
      <div className="flex flex-1 items-center border-b border-[#dcdddf]">
        <button role="tab" aria-selected="false" type="button" className="w-[54px]">共享</button>
        <button role="tab" aria-selected="false" type="button" className="w-[52px]">查看</button>
        <button type="button" aria-label="折叠功能区" className="ml-auto"><Chevron dir="up" color="#999" width={1.3} /></button>
        <button type="button" aria-label="帮助" className="-mr-1 ml-[9px] flex h-4 w-4 items-center justify-center rounded-full bg-[#0d66b8] font-bold text-white">?</button>
      </div>
    </div>
    <Ribbon />
    <AddressRow />
    <div className="flex min-h-0 flex-1">
      <NavigationPane />
      <section className="flex-1 pl-1 pt-[18px] text-center leading-4 text-[#6d6d6d]">此文件夹为空。</section>
    </div>
    <footer className="flex h-[23px] shrink-0 items-center pl-3.5 text-[#1e395b]">
      <span>0 个项目</span>
      <button type="button" aria-label="详细信息" className="ml-auto">
        <svg viewBox="0 0 16 13" className="h-[13px] w-4" aria-hidden="true">
          <path d="M.5.500h4v12h-4zM.5 4.500h4M.5 8.500h4" fill="none" stroke="#8a8a8a" />
          <path d="M6 2.500h4M12 2.500h4M6 6.500h4M12 6.500h4M6 10.500h4M12 10.500h4" stroke="#6a6a6a" />
        </svg>
      </button>
      <button type="button" aria-label="大图标" className="ml-1.5"><PictureIcon className="h-4 w-4" /></button>
    </footer>
  </main>
);

const App: React.FC = () => (
  <div className="relative h-screen overflow-hidden bg-[#0091f0] text-xs font-[Noto_Sans,Noto_Sans_CJK_SC,sans-serif]">
    <Wallpaper />

    {/* Desktop fences */}
    <div className="absolute -right-36 left-[221px] top-0 h-[3px] bg-[rgba(0,40,80,0.3)]" />
    <section className="absolute -right-36 left-[221px] top-[13px] h-[254px] border border-[rgba(90,170,220,0.2)] bg-[rgba(0,50,80,0.25)]">
      <h2 className="flex h-[31px] items-center justify-center text-white [text-shadow:0_1px_2px_#000,1px_1px_2px_#000]">新建格子</h2>
      <ShortcutRow items={programRow} />
      <ShortcutRow items={toolRow} />
    </section>
    <section className="absolute -right-36 left-[221px] top-[270px] h-[153px] border border-[rgba(90,170,220,0.2)] bg-[rgba(0,50,80,0.25)] pt-[31px]">
      <ShortcutRow items={pdfRow} />
    </section>
    <div className="absolute left-0 top-5 flex flex-col items-start gap-[10px] leading-4 text-white [text-shadow:0_1px_2px_#000,1px_1px_2px_#000]">
      <span className="h-[33px] w-[5px] bg-white" />
      <span>orSy<br />.01...</span>
    </div>

    <RunDialog />
    <ExplorerWindow />
  </div>
);

export default App;
